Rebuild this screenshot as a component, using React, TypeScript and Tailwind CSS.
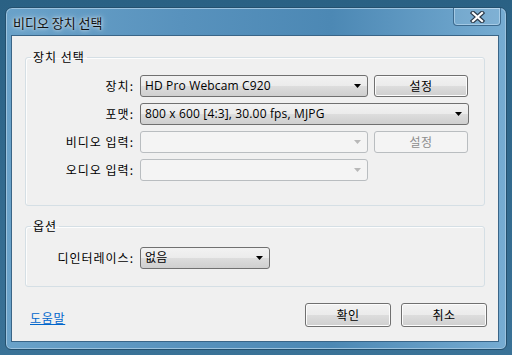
import React from "react";

const FONT = '"Open Sans","Noto Sans CJK KR",sans-serif';
const KFONT = '"Noto Sans CJK KR","Open Sans",sans-serif';

function Arrow({ disabled }: { disabled?: boolean }) {
  return (
    <svg width="7" height="4" viewBox="0 0 7 4" className="shrink-0">
      <path d="M0 0H7L3.5 4Z" fill={disabled ? "#b8b8b8" : "#000"} />
    </svg>
  );
}

function Combo({ w, text, disabled }: { w: string; text?: string; disabled?: boolean }) {
  return (
    <div
      className={
        "h-[22px] flex items-center justify-between pl-[4px] pr-[6px] rounded-[3px] border " +
        w +
        (disabled
          ? " border-[#b9bdc0] bg-[#f4f4f4]"
          : " border-[#707070] bg-[linear-gradient(#f2f2f2_0%,#ebebeb_50%,#dddddd_50%,#cfcfcf_100%)]")
      }
    >
      <span className="text-[12px] leading-[16px] text-black whitespace-nowrap tracking-[0.15px]">{text}</span>
      <Arrow disabled={disabled} />
    </div>
  );
}

function Btn({ w, text, disabled, h = "h-[22px]" }: { w: string; text: string; disabled?: boolean; h?: string }) {
  return (
    <div
      className={
        "flex items-center justify-center rounded-[3px] border text-[12px] leading-[16px] tracking-[0.5px] " +
        w +
        " " +
        h +
        (disabled
          ? " border-[#b9bdc0] bg-[#f4f4f4] text-[#8d8d8d]"
          : " border-[#707070] bg-[linear-gradient(#f2f2f2_0%,#ebebeb_50%,#dddddd_50%,#cfcfcf_100%)] text-black shadow-[inset_0_0_0_1px_#fcfcfc]")
      }
      style={{ fontFamily: KFONT }}
    >
      {text}
    </div>
  );
}

function Label({ children }: { children: React.ReactNode }) {
  return (
    <div className="w-[108px] text-right text-[12px] leading-[16px] text-black tracking-[1px]" style={{ fontFamily: KFONT }}>
      {children}
    </div>
  );
}

export default function App() {
  return (
    <div className="w-[512px] h-[355px] overflow-hidden bg-[linear-gradient(#2a6184,#3a7297)] pt-[7px] pl-[5px]" style={{ fontFamily: FONT }}>
      <div className="w-[502px] h-[343px] rounded-t-[7px] rounded-b-[6px] border border-[#24506e] bg-[linear-gradient(90deg,#6aa2c9_0%,#5892bd_35%,#4c88b4_65%,#76acd2_100%)] shadow-[inset_0_0_0_1px_#9cc3df] flex flex-col">
        <div className="h-[27px] flex items-start justify-between">
          <div
            className="pl-[7px] pt-[7px] text-[13px] leading-[16px] text-[#111] [text-shadow:0_0_6px_rgba(255,255,255,0.9),0_0_3px_rgba(255,255,255,0.7)]"
            style={{ fontFamily: KFONT }}
          >
            비디오 장치 선택
          </div>
          <div className="mr-[5px] w-[48px] h-[18px] rounded-b-[4px] border border-t-0 border-[#3d6b8f] shadow-[inset_0_0_0_1px_rgba(200,225,245,0.55)] bg-[rgba(255,255,255,0.08)] flex items-center justify-center">
            <svg width="15" height="12" viewBox="0 0 15 12">
              <path d="M3 2L12 10M12 2L3 10" stroke="#2b3a4a" strokeWidth="4.5" strokeLinecap="square" />
              <path d="M3 2L12 10M12 2L3 10" stroke="#ffffff" strokeWidth="2.2" strokeLinecap="square" />
            </svg>
          </div>
        </div>
        <div className="ml-[5px] w-[488px] h-[307px] border border-[#3a6587] bg-[#f0f0f0] flex flex-col">
          <fieldset className="ml-[13px] mt-[13px] w-[460px] h-[157px] border border-[#d5dfe5] rounded-[3px] shadow-[inset_1px_1px_0_#fdfdfd]">
            <legend className="ml-[5px] px-[2px] text-[12px] leading-[16px] text-black tracking-[1px]" style={{ fontFamily: KFONT }}>
              장치 선택
            </legend>
            <div className="pt-[10px] flex flex-col gap-[6px]">
              <div className="flex items-center gap-[6px]">
                <Label>장치:</Label>
                <Combo w="w-[228px]" text="HD Pro Webcam C920" />
                <Btn w="w-[94px] -mt-[1px]" text="설정" />
              </div>
              <div className="flex items-center gap-[6px]">
                <Label>포맷:</Label>
                <Combo w="w-[329px]" text="800 x 600 [4:3], 30.00 fps, MJPG" />
              </div>
              <div className="flex items-center gap-[6px]">
                <Label>비디오 입력:</Label>
                <Combo w="w-[228px]" disabled />
                <Btn w="w-[94px] -mt-[1px]" text="설정" disabled />
              </div>
              <div className="flex items-center gap-[6px]">
                <Label>오디오 입력:</Label>
                <Combo w="w-[228px]" disabled />
              </div>
            </div>
          </fieldset>
          <fieldset className="ml-[13px] mt-[12px] w-[460px] h-[69px] border border-[#d5dfe5] rounded-[3px] shadow-[inset_1px_1px_0_#fdfdfd]">
            <legend className="ml-[5px] px-[2px] text-[12px] leading-[16px] text-black tracking-[1px]" style={{ fontFamily: KFONT }}>
              옵션
            </legend>
            <div className="pt-[13px] flex items-center gap-[6px]">
              <Label>디인터레이스:</Label>
              <Combo w="w-[130px]" text="없음" />
            </div>
          </fieldset>
          <div className="mt-[16px] flex items-center justify-between pl-[18px] pr-[11px]">
            <span className="text-[12px] leading-[16px] text-[#0066cc] underline mt-[5px] tracking-[0.7px]" style={{ fontFamily: KFONT }}>
              도움말
            </span>
            <div className="flex gap-[10px]">
              <Btn w="w-[86px]" h="h-[24px]" text="확인" />
              <Btn w="w-[86px]" h="h-[24px]" text="취소" />
            </div>
          </div>
        </div>
      </div>
    </div>
  );
}
